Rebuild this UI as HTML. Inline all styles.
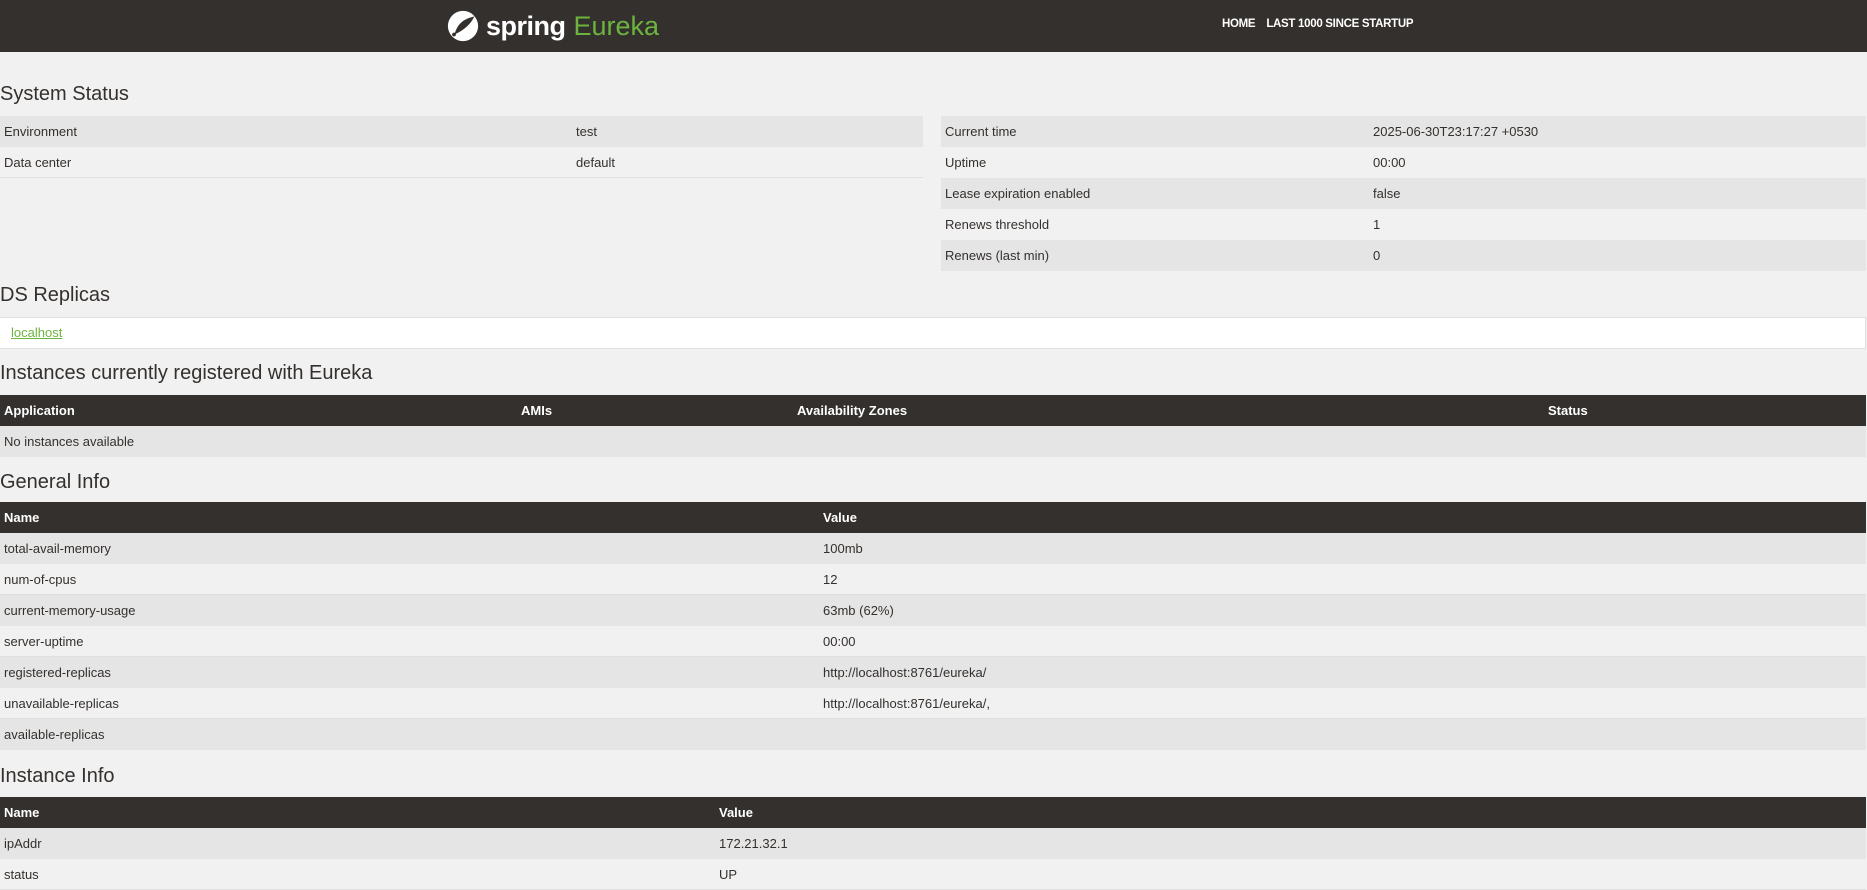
<!DOCTYPE html>
<html><head><meta charset="utf-8"><style>
*{margin:0;padding:0;box-sizing:border-box}
body{width:1867px;height:871px;overflow:hidden;background:#f1f1f1;font-family:"Liberation Sans",sans-serif;color:#34302d;font-size:13px}
.hdr{height:52px;background:#34302d;position:relative}
.logo{position:absolute;left:446px;top:5px;height:42px;display:flex;align-items:center}
.logo .s{color:#fff;font-size:27px;font-weight:bold;letter-spacing:-0.5px;margin-left:6px}
.logo .e{color:#6db33f;font-size:27px;margin-left:8px}
.nav{position:absolute;top:18px;left:1222px;color:#fff;font-weight:bold;font-size:11.5px;letter-spacing:-0.3px}
.nav span{margin-right:11px}
h2{position:absolute;left:0;font-size:20px;font-weight:normal;color:#34302d}
.tbl{position:absolute}
.row{height:31px;line-height:31px;position:relative;padding-left:4px}
.row .v{position:absolute;top:0}
.d{background:#e5e5e5}
.l{background:#f1f1f1;border-bottom:1px solid #e0e0e0}
.th{background:#34302d;color:#fff;font-weight:bold;height:31px;line-height:31px;position:relative;padding-left:4px}
.th span{position:absolute;top:0}
</style></head><body>
<div class="hdr">
 <div class="logo">
  <svg width="34" height="34" viewBox="0 0 36 36"><circle cx="18" cy="18" r="16" fill="#fff"/><path d="M9 27 C12 15 20 10 30 8 C26 16 20 22 9 27Z" fill="#34302d"/><circle cx="8.5" cy="27" r="2" fill="#34302d"/></svg>
  <span class="s">spring</span><span class="e">Eureka</span>
 </div>
 <div class="nav"><span>HOME</span><span>LAST 1000 SINCE STARTUP</span></div>
</div>
<h2 style="top:83px">System Status</h2>
<div class="tbl" style="left:0;top:116px;width:923px">
 <div class="row d">Environment<span class="v" style="left:576px">test</span></div>
 <div class="row l">Data center<span class="v" style="left:576px">default</span></div>
</div>
<div class="tbl" style="left:941px;top:116px;width:925px">
 <div class="row d">Current time<span class="v" style="left:432px">2025-06-30T23:17:27 +0530</span></div>
 <div class="row l" style="border:none">Uptime<span class="v" style="left:432px">00:00</span></div>
 <div class="row d">Lease expiration enabled<span class="v" style="left:432px">false</span></div>
 <div class="row l" style="border:none">Renews threshold<span class="v" style="left:432px">1</span></div>
 <div class="row d">Renews (last min)<span class="v" style="left:432px">0</span></div>
</div>
<h2 style="top:284px">DS Replicas</h2>
<div class="tbl" style="left:0;top:317px;width:1866px;height:32px;background:#fff;border-top:1px solid #e0e0e0;border-bottom:1px solid #e0e0e0;border-right:1px solid #e0e0e0;line-height:30px;padding-left:11px"><span style="color:#6db33f;text-decoration:underline">localhost</span></div>
<h2 style="top:362px">Instances currently registered with Eureka</h2>
<div class="tbl" style="left:0;top:395px;width:1866px">
 <div class="th">Application<span style="left:521px">AMIs</span><span style="left:797px">Availability Zones</span><span style="left:1548px">Status</span></div>
 <div class="row d">No instances available</div>
</div>
<h2 style="top:471px">General Info</h2>
<div class="tbl" style="left:0;top:502px;width:1866px">
 <div class="th">Name<span style="left:823px">Value</span></div>
 <div class="row d">total-avail-memory<span class="v" style="left:823px">100mb</span></div>
 <div class="row l">num-of-cpus<span class="v" style="left:823px">12</span></div>
 <div class="row d">current-memory-usage<span class="v" style="left:823px">63mb (62%)</span></div>
 <div class="row l">server-uptime<span class="v" style="left:823px">00:00</span></div>
 <div class="row d">registered-replicas<span class="v" style="left:823px">http://localhost:8761/eureka/</span></div>
 <div class="row l">unavailable-replicas<span class="v" style="left:823px">http://localhost:8761/eureka/,</span></div>
 <div class="row d">available-replicas<span class="v" style="left:823px"></span></div>
</div>
<h2 style="top:765px">Instance Info</h2>
<div class="tbl" style="left:0;top:797px;width:1866px">
 <div class="th">Name<span style="left:719px">Value</span></div>
 <div class="row d">ipAddr<span class="v" style="left:719px">172.21.32.1</span></div>
 <div class="row l">status<span class="v" style="left:719px">UP</span></div>
</div>
</body></html>
